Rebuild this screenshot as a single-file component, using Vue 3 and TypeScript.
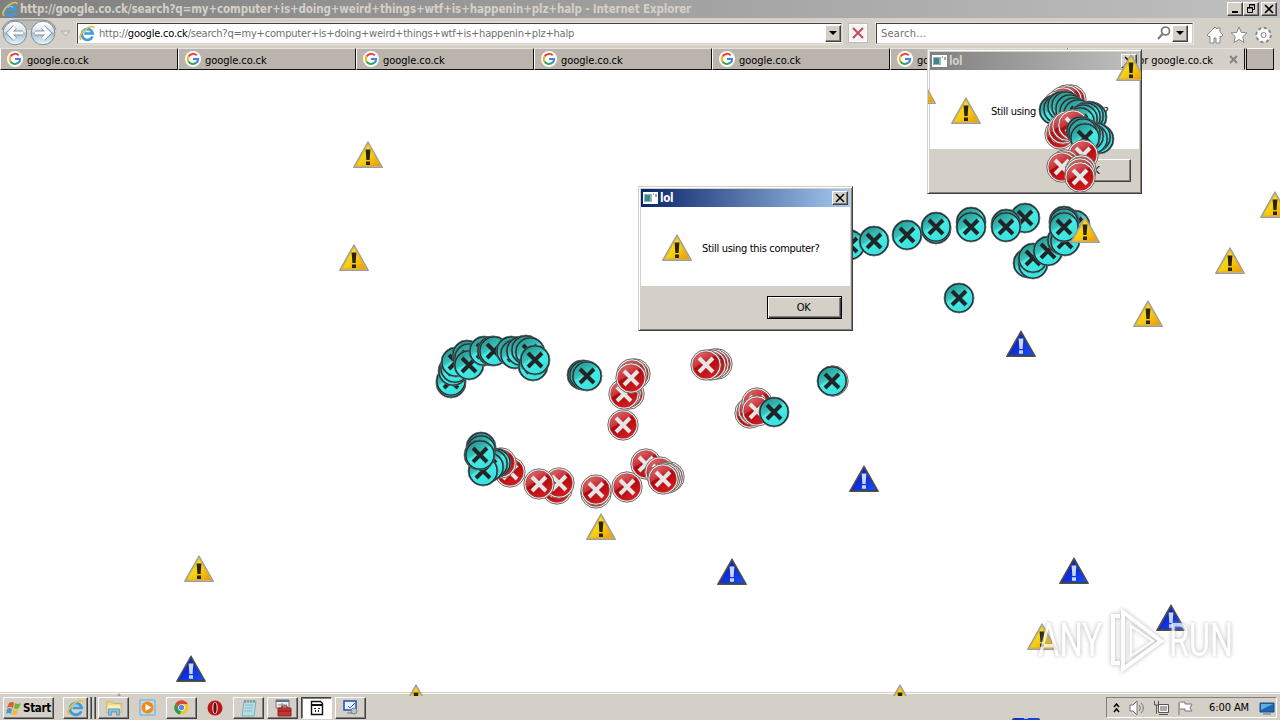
<template>
    <div class="desktop">
        <svg class="defs" width="0" height="0" aria-hidden="true">
            <defs>
                <linearGradient id="yellowFill" x1="0" y1="0" x2="1" y2="1">
                    <stop offset="0" stop-color="#fff21c" />
                    <stop offset=".55" stop-color="#f5cd10" />
                    <stop offset="1" stop-color="#ee9800" />
                </linearGradient>
                <linearGradient id="blueFill" x1="0" y1="0" x2="1" y2="1">
                    <stop offset="0" stop-color="#0618c2" />
                    <stop offset=".55" stop-color="#1030e0" />
                    <stop offset="1" stop-color="#1450ff" />
                </linearGradient>
                <linearGradient id="redFill" x1="0" y1="0" x2=".6" y2="1">
                    <stop offset="0" stop-color="#e08080" />
                    <stop offset=".46" stop-color="#c93138" />
                    <stop offset=".5" stop-color="#ae080d" />
                    <stop offset="1" stop-color="#d41c20" />
                </linearGradient>
                <linearGradient id="tealFill" x1="0" y1="0" x2=".6" y2="1">
                    <stop offset="0" stop-color="#208a84" />
                    <stop offset=".46" stop-color="#38c1bb" />
                    <stop offset=".54" stop-color="#48ebe6" />
                    <stop offset="1" stop-color="#38e2dd" />
                </linearGradient>
                <symbol id="warn" viewBox="-16 -15 32 30">
                    <path d="M0-13 14.3 12.3H-14.3Z" fill="#d5d0bd" stroke="#a29d92" stroke-width="1.4" stroke-linejoin="round" />
                    <path d="M0-10.8 12.3 11H-12.3Z" fill="url(#yellowFill)" stroke="#d8a514" stroke-width=".6" />
                    <path d="M-2.4-5.5h4.8L1.6 5h-3.2ZM-2 6.4h4v3.6h-4Z" fill="#28230f" />
                </symbol>
                <symbol id="info" viewBox="-16 -15 32 30">
                    <path d="M0-13 14.3 12.4H-14.3Z" fill="#38434e" stroke="#4c5057" stroke-width="1.2" stroke-linejoin="round" />
                    <path d="M0-10 12.2 10.8H-12.2Z" fill="url(#blueFill)" />
                    <path d="M-2.4-5.5h4.8L1.6 5h-3.2ZM-2 6.2h4v3.6h-4Z" fill="#c9d8ff" />
                </symbol>
                <symbol id="error" viewBox="-16 -16 32 32">
                    <circle r="15.2" fill="#f4f1ef" stroke="#6d6965" stroke-width="1" />
                    <circle r="13.3" fill="url(#redFill)" stroke="#ad3034" stroke-width=".6" />
                    <path d="m-7-7 14 14m0-14L-7 7" stroke="#e5e6e4" stroke-width="4" />
                </symbol>
                <symbol id="teal" viewBox="-16 -16 32 32">
                    <circle r="15" fill="#1b2528" stroke="#59666a" stroke-width=".8" />
                    <circle r="13.4" fill="url(#tealFill)" />
                    <path d="m-7-7 14 14m0-14L-7 7" stroke="#202527" stroke-width="4" />
                </symbol>
                <symbol id="ie" viewBox="0 0 16 16">
                    <path d="M12.7 10.8A5.2 5.2 0 1 1 13 8H5" fill="none" stroke="#3d9bdc" stroke-width="2.4" />
                    <path d="M2.2 13.8C-1.1 12.6 2 6.5 7.3 3.3c3.8-2.5 7-2.6 6.8-.2" fill="none" stroke="#eabf3a" stroke-width="1.5" />
                    <path d="M5.3 6.3c1-1.5 4-1.4 5 0" stroke="#80ccf5" fill="none" />
                </symbol>
                <symbol id="google" viewBox="0 0 16 16">
                    <circle cx="8" cy="8" r="8" fill="#fff" />
                    <path d="M11.7 4.4A5.2 5.2 0 0 0 3.5 5.5" stroke="#e84536" stroke-width="2" fill="none" />
                    <path d="M3.5 5.4a5.2 5.2 0 0 0 0 5.3" stroke="#f5b51d" stroke-width="2" fill="none" />
                    <path d="M3.5 10.5a5.2 5.2 0 0 0 8 1.1" stroke="#35a759" stroke-width="2" fill="none" />
                    <path d="M8 8h5.1a5 5 0 0 1-1.7 3.8" stroke="#427ff0" stroke-width="2" fill="none" />
                </symbol>
            </defs>
        </svg>

        <header class="title-bar">
            <svg class="ie-icon" width="17" height="17"><use href="#ie" /></svg>
            <span class="title-text">http://google.co.ck/search?q=my+computer+is+doing+weird+things+wtf+is+happenin+plz+halp - Internet Explorer</span>
            <div class="window-buttons">
                <button class="caption"><svg viewBox="0 0 14 12"><path d="M4 9h6" stroke="#000" stroke-width="2" /></svg></button>
                <button class="caption"><svg viewBox="0 0 14 12"><path d="M5.5 4V1.5h5v5H9M3.5 4.5h5v5h-5ZM5 2h6M3 5h6" fill="none" stroke="#000" /></svg></button>
                <button class="caption last"><svg viewBox="0 0 14 12"><path d="m3 2 8 8m0-8-8 8" stroke="#000" stroke-width="1.6" /></svg></button>
            </div>
        </header>

        <nav class="toolbar">
            <svg class="nav-buttons" width="74" height="28" viewBox="0 0 74 28">
                <defs><linearGradient id="navFill" x2="0" y2="1"><stop stop-color="#fff" /><stop offset=".45" stop-color="#d9e2e9" /><stop offset=".5" stop-color="#a9bccb" /><stop offset="1" stop-color="#e7faff" /></linearGradient></defs>
                <path d="M2 11A13 13 0 0 1 15 1h28a13 13 0 0 1 13 10" fill="#bdbbb7" stroke="#8f8e8c" />
                <circle cx="15" cy="14" r="11.8" fill="url(#navFill)" stroke="#7d8f9c" />
                <circle cx="43" cy="14" r="11.8" fill="url(#navFill)" stroke="#7d8f9c" />
                <g fill="none" stroke="#7f93a4" stroke-width="5"><path d="M23 14H9m6-6-6 6 6 6M35 14h14m-6-6 6 6-6 6" /></g>
                <g fill="none" stroke="#fff" stroke-width="3.2"><path d="M23 14H9m6-6-6 6 6 6M35 14h14m-6-6 6 6-6 6" /></g>
                <path d="M61 12h9l-4.5 5Z" fill="#e2dfda" stroke="#aaa" />
            </svg>
            <div class="field address">
                <svg width="17" height="17"><use href="#ie" /></svg>
                <span class="url">http://<b>google.co.ck</b>/search?q=my+computer+is+doing+weird+things+wtf+is+happenin+plz+halp</span>
                <button class="drop"><i></i></button>
            </div>
            <button class="stop"><svg width="14" height="14" viewBox="0 0 14 14"><path d="m2 2 10 10m0-10L2 12" stroke="#c34d58" stroke-width="2" /></svg></button>
            <div class="field search">
                <span>Search...</span>
                <svg width="16" height="16" viewBox="0 0 16 16"><circle cx="9.5" cy="6" r="4" fill="#fff" stroke="#777" stroke-width="1.7" /><path d="m6.5 9-4.5 5" stroke="#777" stroke-width="2" /></svg>
                <button class="drop"><i></i></button>
            </div>
            <svg class="tool-icons" width="68" height="20" viewBox="0 0 68 20">
                <g fill="#fff" stroke="#85888a" stroke-width="1">
                    <path d="m2 10 8-8 2 2V3h3v4l3 3-2 2-1-1v7h-4v-5H9v5H5v-7l-1 1Z" />
                    <path d="m34 2 2.3 5.4 5.7.5-4.3 3.8 1.4 5.8-5.1-3-5.1 3 1.4-5.8L26 7.9l5.7-.5Z" />
                    <circle cx="58.5" cy="10" r="6.9" stroke-width="2.6" stroke-dasharray="2.9 2.52" />
                    <circle cx="58.5" cy="10" r="5.8" stroke="#fff" />
                    <circle cx="58.5" cy="10" r="2.5" />
                </g>
            </svg>
        </nav>

        <div class="tabs">
            <div v-for="n in 6" :key="n" class="tab">
                <svg width="16" height="16"><use href="#google" /></svg>
                <span>google.co.ck</span>
            </div>
            <div class="tab active">
                <span>Waiting for google.co.ck</span>
                <svg width="9" height="9" viewBox="0 0 9 9"><path d="m1 1 7 7m0-7L1 8" stroke="#858585" stroke-width="2" /></svg>
            </div>
            <div class="new-tab"></div>
        </div>

        <main class="page"></main>

        <footer class="taskbar">
            <button class="task start">
                <svg width="16" height="16" viewBox="0 0 16 16"><path d="M3 3q3-2 5 0L7 8Q4 6 1 8Z" fill="#e55d2c" /><path d="M9 3q3 2 6 0l-2 5q-3 2-5 0Z" fill="#72b43c" /><path d="M1 9q3-2 5 0l-1 5q-3-2-5 0Z" fill="#4b94d5" /><path d="M7 9q3 2 5 0l-1 5q-3 2-5 0Z" fill="#efbd2d" /></svg>
                <span>Start</span>
            </button>
            <button class="task ie-task"><svg width="18" height="18"><use href="#ie" /></svg></button>
            <i class="stack"></i><i class="stack"></i>
            <button class="task explorer"><svg width="18" height="18" viewBox="0 0 20 20"><path d="M2 3h5l2 2h9v10H2Z" fill="#eed88c" stroke="#c9b062" /><path d="M3 7h14v5H3Z" fill="#fff0b3" /><path d="M4 18v-7h12v7h-3v-4H7v4Z" fill="#83c5e8" stroke="#5799c0" /></svg></button>
            <span class="quick media"><svg width="17" height="17" viewBox="0 0 17 17"><path d="M1 1h15v15H1Z" fill="#b8ddf4" stroke="#70a7ca" /><circle cx="8.5" cy="8.5" r="6" fill="#f38a15" /><path d="m6.5 5 6 3.5-6 3.5Z" fill="#fff" /></svg></span>
            <button class="task"><svg width="15" height="15" viewBox="0 0 17 17"><circle cx="8.5" cy="8.5" r="8" fill="#f1c62b" /><path d="M1.5 4.5a8 8 0 0 1 14 0h-7L5 10Z" fill="#d94739" /><path d="M1.5 4.5 5 10l3.5 2-2 4.5a8 8 0 0 1-5-12" fill="#279b58" /><circle cx="8.5" cy="8.5" r="3.8" fill="#fff" /><circle cx="8.5" cy="8.5" r="3" fill="#4b8eea" /></svg></button>
            <span class="quick opera"><svg width="16" height="16" viewBox="0 0 16 16"><circle cx="8" cy="8" r="7.5" fill="#b9161b" /><ellipse cx="8" cy="8" rx="2.8" ry="6" fill="#e6d5d3" /><ellipse cx="8" cy="8" rx="1.6" ry="5.3" fill="#72090d" /></svg></span>
            <button class="task notepad"><svg width="18" height="18" viewBox="0 0 18 18"><path d="M4 2h12l-2 15H2Z" fill="#b3dee3" stroke="#7fb0b8" /><path d="M5 6h8M5 9h8M4 12h8" stroke="#8abcc5" /><path d="M5 1v3m3-3v3m3-3v3m3-3v3" stroke="#777" /></svg></button>
            <button class="task toolbox"><svg width="18" height="18" viewBox="0 0 18 18"><path d="M2 1h13v8H2Z" fill="#eee" stroke="#777" /><path d="M2 2h13" stroke="#577299" stroke-width="2" /><path d="M4 6h9M8 4v5" stroke="#888" /><path d="M4 9h13v8H4Z" fill="#c53434" stroke="#962323" /><path d="M8 9V7h5v2M4 12h13" fill="none" stroke="#821b1b" /></svg></button>
            <button class="task pressed"><svg width="14" height="16" viewBox="0 0 14 16"><path d="M1.5 1.5h9l2 2v11h-11Z" fill="#fff" stroke="#111" stroke-width="1.4" /><path d="M2 5h10" stroke="#111" stroke-width="2" /><path d="M4 8h2v1H4Zm4 0h2v1H8ZM5 10h1v2H5Zm3 0h1v2H8Z" fill="#222" /></svg></button>
            <button class="task last-task"><svg width="17" height="17" viewBox="0 0 17 17"><path d="M2 2h12v9H2Z" fill="#e8f2ff" stroke="#1e4dae" stroke-width="1.5" /><path d="m6 7 2 2 5-5" stroke="#326bc1" fill="none" /><circle cx="12" cy="12" r="3" fill="#b8c2c8" stroke="#758087" /><path d="M5 14h5" stroke="#777" /></svg></button>
            <div class="tray">
                <svg class="chevrons" width="7" height="10" viewBox="0 0 7 10"><path d="m1 4 2.5-3L6 4M1 9l2.5-3L6 9" fill="none" stroke="#000" stroke-width="1.5" /></svg>
                <svg width="17" height="16" viewBox="0 0 17 16"><path d="M1 5h3l4-4v14l-4-4H1Z" fill="#fff" stroke="#777" /><path d="M10 5q3 3 0 6m2-8q5 5 0 10" fill="none" stroke="#777" /></svg>
                <svg width="17" height="16" viewBox="0 0 17 16"><path d="M5.5 4.5h10v8h-10Z" fill="#aaa" stroke="#555" /><path d="M6.5 5.5h8v6h-8Z" stroke="#fff" fill="#aaa" /><path d="M1.5 1v4h4V1M3.5 5v8.500M6 14.500h9" fill="none" stroke="#555" /></svg>
                <svg width="17" height="16" viewBox="0 0 17 16"><path d="M2 2v13M3 2h5v2h7l-2 4 2 3H8V9H3" fill="#fff" stroke="#777" /></svg>
                <span class="clock">6:00 AM</span>
                <svg width="16" height="14" viewBox="0 0 16 14"><path d="M1 2h14v9H1Z" fill="#1769b8" stroke="#234b78" /><path d="M2 3h12L2 9Z" fill="#64a9e2" /><path d="M4 13h8" stroke="#63717c" /></svg>
            </div>
        </footer>

        <section v-for="d in dialogs" :key="d.x" class="dialog" :class="{ inactive: !d.active }" :style="{ left: d.x + 'px', top: d.y + 'px' }">
            <div class="dialog-title">
                <svg width="15" height="12" viewBox="0 0 15 12"><path d="M0 0h15v12H0Z" fill="#fff" /><path d="M1 2h8v8H1Z" fill="#8fb9bb" /><path d="M2 3h5v6H2Z" fill="#3f8589" /><path d="M10 2h1m2 0v3" stroke="#555" /></svg>
                <span>lol</span>
                <button class="caption last"><svg viewBox="0 0 14 12"><path d="m3 2 8 8m0-8-8 8" stroke="#000" stroke-width="1.5" /></svg></button>
            </div>
            <div class="dialog-body">
                <svg width="32" height="30"><use href="#warn" /></svg>
                <span>Still using this computer?</span>
            </div>
            <div class="dialog-actions"><button>OK</button></div>
        </section>

        <svg class="trail" width="1280" height="720" viewBox="0 0 1280 720">
            <defs>
                <clipPath id="aboveTaskbar"><path d="M0 0h1280v696H0Z" /></clipPath>
                <clipPath id="belowTray"><path d="M1000 718h50v2h-50Z" /></clipPath>
                <clipPath id="insideDialog"><path d="M928 51h213v143H928Z" /></clipPath>
                <!-- everything but the focused dialog -->
                <clipPath id="besideDialog"><path clip-rule="evenodd" d="M0 0h1280v720H0ZM638 186h215v145H638Z" /></clipPath>
            </defs>
            <g clip-path="url(#besideDialog)">
                <use v-for="(c, i) in circles" :key="i" :href="'#' + c[0]" :x="c[1] - 16" :y="c[2] - 16" width="32" height="32" />
            </g>
            <g clip-path="url(#aboveTaskbar)">
                <use v-for="(t, i) in triangles" :key="i" :href="'#' + t[0]" :x="t[1] - 16" :y="t[2] - 15" width="32" height="30" />
            </g>
            <g clip-path="url(#insideDialog)">
                <use href="#warn" x="1115" y="53" width="32" height="30" />
                <use href="#warn" x="905" y="76" width="32" height="30" />
            </g>
            <g clip-path="url(#belowTray)">
                <use href="#info" x="1010" y="694" width="32" height="30" />
            </g>
        </svg>

        <svg class="watermark" width="230" height="72" viewBox="0 0 230 72">
            <text x="8" y="52" textLength="64" lengthAdjust="spacingAndGlyphs">ANY</text>
            <g fill="none" stroke="#fff" stroke-width="4">
                <path d="M90 12h-7v47h7M93 8v57l38-28Z" />
                <path d="M101 22v30l22-15Z" stroke-width="2" />
            </g>
            <text x="139" y="52" textLength="64" lengthAdjust="spacingAndGlyphs">RUN</text>
        </svg>
    </div>
</template>

<script setup lang="ts">
type Mark = [kind: string, x: number, y: number];

const dialogs = [
    { x: 927, y: 49, active: false },
    { x: 638, y: 186, active: true },
];

// painted in order, later ones lie on top
const circles: Mark[] = [
    ['teal', 848, 244], ['teal', 850, 245], ['teal', 874, 241], ['teal', 907, 235],
    ['teal', 936, 229], ['teal', 936, 227], ['teal', 971, 222], ['teal', 971, 227],
    ['teal', 1025, 218], ['teal', 1006, 224], ['teal', 1006, 227], ['teal', 1028, 263],
    ['teal', 1033, 264], ['teal', 1033, 258], ['teal', 1048, 251], ['teal', 1062, 240],
    ['teal', 1065, 241], ['teal', 1075, 225], ['teal', 1064, 221], ['teal', 1064, 223],
    ['teal', 1064, 227], ['teal', 959, 298],

    ['teal', 451, 383], ['teal', 451, 381], ['teal', 453, 371], ['teal', 455, 368],
    ['teal', 456, 362], ['teal', 467, 355], ['teal', 469, 358], ['teal', 469, 365],
    ['teal', 484, 351], ['teal', 492, 351], ['teal', 494, 351], ['teal', 511, 351],
    ['teal', 515, 354], ['teal', 521, 351], ['teal', 526, 350], ['teal', 530, 352],
    ['teal', 533, 366], ['teal', 535, 360], ['teal', 582, 375], ['teal', 584, 375], ['teal', 587, 376],

    ['error', 629, 394], ['error', 626, 393], ['error', 624, 394], ['error', 635, 374],
    ['error', 632, 374], ['error', 631, 378], ['error', 623, 425],
    ['error', 717, 364], ['error', 714, 364], ['error', 711, 365], ['error', 706, 365],
    ['error', 750, 413], ['error', 753, 410], ['error', 757, 403], ['error', 757, 411],
    ['teal', 774, 412], ['error', 833, 381], ['teal', 832, 381],

    ['error', 510, 472], ['error', 501, 463], ['teal', 496, 463], ['teal', 493, 464],
    ['teal', 489, 467], ['teal', 483, 471], ['teal', 481, 447], ['teal', 481, 450],
    ['teal', 479, 455], ['teal', 480, 455], ['error', 557, 489], ['error', 559, 483],
    ['error', 539, 484], ['error', 596, 493], ['error', 596, 490], ['error', 627, 487],
    ['error', 646, 464], ['error', 660, 472], ['error', 669, 477], ['error', 667, 478],
    ['error', 665, 478], ['error', 663, 479],

    ['error', 1071, 100], ['error', 1067, 100], ['error', 1063, 102], ['error', 1058, 106],
    ['teal', 1054, 110], ['teal', 1058, 109], ['teal', 1062, 106], ['teal', 1066, 106],
    ['teal', 1070, 109], ['teal', 1074, 112], ['teal', 1078, 114], ['teal', 1092, 117],
    ['teal', 1089, 116], ['teal', 1086, 117], ['teal', 1083, 119], ['teal', 1080, 122],
    ['error', 1060, 134], ['error', 1063, 129], ['error', 1067, 126], ['error', 1073, 125],
    ['teal', 1099, 139], ['teal', 1096, 137], ['teal', 1093, 139], ['teal', 1089, 136],
    ['teal', 1086, 134], ['teal', 1081, 131], ['teal', 1083, 133], ['teal', 1085, 138],
    ['error', 1083, 155], ['error', 1065, 165], ['error', 1062, 167], ['error', 1081, 170],
    ['error', 1080, 173], ['error', 1080, 177],
];

const triangles: Mark[] = [
    ['warn', 368, 155], ['warn', 354, 258], ['warn', 1230, 261], ['warn', 1148, 314],
    ['warn', 1275, 205], ['warn', 1085, 230], ['warn', 601, 527], ['warn', 199, 569],
    ['warn', 1042, 637], ['warn', 416, 698], ['warn', 900, 698], ['warn', 119, 707],
    ['info', 1021, 344], ['info', 864, 479], ['info', 732, 572], ['info', 1074, 571],
    ['info', 1171, 618], ['info', 191, 669],
];
</script>

<style>
body {
    margin: 0;
    overflow: hidden;
}
</style>

<style scoped>
* {
    box-sizing: border-box;
}

.desktop {
    position: relative;
    width: 1280px;
    height: 720px;
    overflow: hidden;
    display: flex;
    flex-direction: column;
    background: #fff;
    color: #000;
    font: 11px "DejaVu Sans Condensed", "DejaVu Sans", sans-serif;
    font-stretch: condensed;
    letter-spacing: -0.31px;
    white-space: nowrap;
}

svg {
    flex: none;
    display: block;
}

.defs {
    position: absolute;
}

button {
    font: inherit;
    letter-spacing: inherit;
    color: inherit;
    padding: 0;
    margin: 0;
    border: 1px solid;
    border-color: #fff #404040 #404040 #fff;
    box-shadow: inset -1px -1px #808080;
    background: #d4d0c8;
    flex: none;
}

.title-bar {
    height: 18px;
    flex: none;
    display: flex;
    align-items: center;
    padding: 0 3px 0 2px;
    background: linear-gradient(90deg, #808080, #c0c0c0);
    color: #d4d0c8;
    font-size: 11.5px;
    font-weight: bold;
}

.title-text {
    margin-left: 1px;
    letter-spacing: -0.12px;
}

.window-buttons {
    display: flex;
    margin-left: auto;
}

.caption {
    width: 16px;
    height: 14px;
}

.caption svg {
    width: 14px;
    height: 12px;
}

.window-buttons .last {
    margin-left: 2px;
}

.toolbar {
    height: 30px;
    flex: none;
    display: flex;
    align-items: center;
    background: #d4d0c8;
}

.field {
    height: 21px;
    display: flex;
    align-items: center;
    background: #fff;
    border: 1px solid;
    border-color: #404040 #d4d0c8 #d4d0c8 #404040;
    box-shadow: 0 0 0 1px #e5e2dc;
    color: #707070;
}

.field span {
    padding-top: 1px;
}

.address {
    width: 765px;
    margin-left: 3px;
    padding-left: 1px;
}

.url {
    margin-left: 3px;
    letter-spacing: -0.21px;
}

.url b {
    font-weight: normal;
    color: #000;
}

.drop {
    width: 16px;
    height: 17px;
    margin-left: auto;
    display: flex;
    align-items: center;
    justify-content: center;
}

.drop i {
    border: 4px solid transparent;
    border-top-color: #000;
    border-bottom: 0;
}

.stop {
    width: 20px;
    height: 20px;
    margin-left: 6px;
    display: flex;
    align-items: center;
    justify-content: center;
    border-color: #bbb;
    background: #f5f4f2;
    box-shadow: inset 0 0 0 1px #fff;
}

.search {
    width: 317px;
    margin-left: 8px;
    padding-left: 4px;
    padding-right: 4px;
}

.search span {
    letter-spacing: 0.2px;
}

.search svg {
    margin-left: auto;
}

.search .drop {
    margin-left: 0;
}

.tool-icons {
    margin: 3px 0 0 12px;
}

.tabs {
    height: 22px;
    flex: none;
    display: flex;
    background: #d4d0c8;
}

.tab {
    width: 178px;
    height: 22px;
    flex: none;
    display: flex;
    align-items: center;
    padding-left: 6px;
    background: #bab4ac;
    border-left: 1px solid #fff;
    border-right: 1px solid #111;
    border-bottom: 1px solid #111;
    border-top: 1px solid #e5e2dd;
}

.tab span {
    margin-left: 4px;
    padding-top: 2px;
    letter-spacing: -0.05px;
}

.tab.active {
    width: 177px;
    justify-content: flex-end;
    padding-right: 6px;
    background: #d4d0c8;
    border-bottom-color: #d4d0c8;
}

.tab.active svg {
    margin-left: 16px;
}

.new-tab {
    width: 28px;
    height: 22px;
    margin-left: 1px;
    background: #bab4ac;
    border: 1px solid #111;
    border-top-color: #fff;
}

.page {
    flex: 1;
}

.taskbar {
    height: 28px;
    flex: none;
    display: flex;
    align-items: center;
    padding: 2px 3px 0;
    background: #d4d0c8;
    border-top: 1px solid #d4d0c8;
    box-shadow: inset 0 1px #fff;
}

.task {
    width: 31px;
    height: 22px;
    display: flex;
    align-items: center;
    justify-content: center;
}

.start {
    width: 51px;
    font-weight: bold;
    font-size: 11.5px;
    letter-spacing: -0.3px;
}

.start span {
    margin-left: 1px;
}

.task + .task {
    margin-left: 3px;
}

.start + .ie-task {
    width: 25px;
    margin-left: 9px;
}

.stack {
    width: 4px;
    height: 22px;
    border-right: 1px solid #404040;
    box-shadow: inset -1px 0 #808080;
}

.explorer {
    margin-left: 2px;
}

.quick {
    margin-left: 10px;
}

.quick + .task {
    margin-left: 10px;
}

.pressed {
    background: #fff;
    border-color: #404040 #fff #fff #404040;
    box-shadow: inset 1px 1px #808080;
}

.tray {
    width: 171px;
    height: 21px;
    margin-left: auto;
    display: flex;
    align-items: center;
    padding: 0 1px 0 6px;
    gap: 7px;
    border: 1px solid;
    border-color: #808080 #fff #fff #808080;
}

.tray .chevrons {
    margin-right: 2px;
}

.clock {
    margin-left: auto;
    margin-right: 3px;
    letter-spacing: -0.1px;
}

.dialog {
    position: absolute;
    width: 215px;
    height: 145px;
    display: flex;
    flex-direction: column;
    padding: 2px;
    border: 1px solid;
    border-color: #d4d0c8 #404040 #404040 #d4d0c8;
    box-shadow: inset 1px 1px #fff, inset -1px -1px #808080;
    background: #d4d0c8;
}

.dialog-title {
    height: 18px;
    flex: none;
    display: flex;
    align-items: center;
    padding: 0 2px;
    background: linear-gradient(90deg, #0a246a, #a6caf0);
    color: #fff;
    font-size: 11.5px;
    font-weight: bold;
}

.inactive .dialog-title {
    background: linear-gradient(90deg, #808080, #c0c0c0);
    color: #d4d0c8;
}

.dialog-title span {
    margin-left: 2px;
}

.dialog-title .caption {
    margin-left: auto;
}

.dialog-body {
    height: 79px;
    flex: none;
    display: flex;
    align-items: center;
    padding: 2px 0 0 20px;
    background: #fff;
}

.dialog-body span {
    margin-left: 9px;
    padding-top: 1px;
}

.dialog-actions {
    flex: 1;
    display: flex;
    align-items: center;
    justify-content: flex-end;
    padding-right: 8px;
}

.dialog-actions button {
    width: 75px;
    height: 23px;
    padding-right: 2px;
    border-color: #000;
    box-shadow: inset 1px 1px #fff, inset -1px -1px #404040, inset -2px -2px #808080;
}

.inactive .dialog-actions button {
    border-color: #fff #404040 #404040 #fff;
    box-shadow: inset -1px -1px #808080;
}

.trail {
    position: absolute;
    left: 0;
    top: 0;
    pointer-events: none;
}

.watermark {
    position: absolute;
    left: 1030px;
    top: 604px;
    opacity: 0.75;
    filter: drop-shadow(0 0 2px #999);
    pointer-events: none;
}

.watermark text {
    fill: #fff;
    font: 46px Roboto, sans-serif;
    letter-spacing: 0;
}
</style>
